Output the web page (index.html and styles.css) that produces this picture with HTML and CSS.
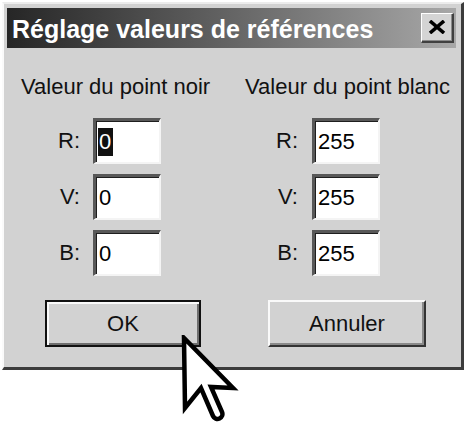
FILE: index.html
```html
<!DOCTYPE html>
<html lang="fr">
<head>
<meta charset="utf-8">
<title>Réglage valeurs de références</title>
<link rel="stylesheet" href="styles.css">
</head>
<body>
<div class="dialog">
  <div class="titlebar">
    <span class="title">Réglage valeurs de références</span>
    <div class="close">
      <svg width="18" height="14" viewBox="0 0 18 14"><path d="M2 1 L16 13 M16 1 L2 13" stroke="#000" stroke-width="3.6" fill="none"/></svg>
    </div>
  </div>
  <div class="panel">
    <div class="column col-left">
      <div class="heading">Valeur du point noir</div>
      <div class="fields">
        <div class="field"><span class="lbl">R:</span><div class="box"><span class="sel">0</span></div></div>
        <div class="field"><span class="lbl">V:</span><div class="box">0</div></div>
        <div class="field"><span class="lbl">B:</span><div class="box">0</div></div>
      </div>
    </div>
    <div class="column col-right">
      <div class="heading">Valeur du point blanc</div>
      <div class="fields">
        <div class="field"><span class="lbl">R:</span><div class="box">255</div></div>
        <div class="field"><span class="lbl">V:</span><div class="box">255</div></div>
        <div class="field"><span class="lbl">B:</span><div class="box">255</div></div>
      </div>
    </div>
  </div>
  <div class="buttons">
    <div class="btn btn-default">OK</div>
    <div class="btn btn-cancel">Annuler</div>
  </div>
</div>
<svg class="cursor" width="62" height="92" viewBox="0 0 62 92">
  <path d="M3,3 L4,73 L20,53 L32,81 A4.9,4.9 0 0 0 41,77 L30,52 L52,53 Z" fill="#fff" stroke="#000" stroke-width="4.5" stroke-linejoin="miter" stroke-miterlimit="10"/>
</svg>
</body>
</html>
```
FILE: styles.css
```css
html, body {
  margin: 0;
  padding: 0;
  background: #fff;
}
body {
  width: 465px;
  height: 423px;
  position: relative;
  overflow: hidden;
  font-family: "Liberation Sans", Arial, sans-serif;
  color: #111;
}
.dialog {
  box-sizing: border-box;
  width: 462px;
  margin: 2px 0 0 2px;
  background: #d2d2d2;
  border-style: solid;
  border-width: 2px 3px 3px 2px;
  border-color: #ececec #3c3c3c #3c3c3c #fafafa;
  padding: 4px 5px 20px 3px;
}
.titlebar {
  height: 40px;
  display: flex;
  align-items: center;
  justify-content: space-between;
  padding: 0 2px 0 5px;
  background: linear-gradient(to right, #262626 0%, #5e5e5e 45%, #a8a8a8 100%);
}
.title {
  color: #fff;
  font-weight: bold;
  font-size: 25px;
  line-height: 28px;
  white-space: nowrap;
  margin-top: 1px;
}
.close {
  box-sizing: border-box;
  width: 33px;
  height: 30px;
  background: #d4d4d4;
  border-style: solid;
  border-width: 1px 2px 2px 1px;
  border-color: #fff #404040 #404040 #fff;
  box-shadow: inset -1px -1px #8a8a8a;
  display: flex;
  align-items: center;
  justify-content: center;
}
.close svg {
  display: block;
  margin-top: -1px;
}
.panel {
  display: grid;
  grid-template-columns: 226px 1fr;
  padding-top: 27px;
}
.heading {
  font-size: 22px;
  line-height: 24px;
  white-space: nowrap;
}
.col-left .heading { padding-left: 14px; }
.col-right .heading { padding-left: 12px; }
.fields {
  display: flex;
  flex-direction: column;
  gap: 10px;
  margin-top: 19px;
}
.col-left .fields { padding-left: 40px; }
.col-right .fields { padding-left: 32px; }
.field {
  display: flex;
  align-items: center;
  gap: 13px;
}
.col-right .field { gap: 14px; }
.lbl {
  width: 33px;
  text-align: right;
  font-size: 22px;
  line-height: 24px;
}
.box {
  box-sizing: border-box;
  width: 68px;
  height: 46px;
  background: #fff;
  border-style: solid;
  border-width: 3px 2px 2px 3px;
  border-color: #585858 #f4f4f4 #f4f4f4 #585858;
  box-shadow: inset 1px 1px #1e1e1e;
  padding-left: 3px;
  display: flex;
  align-items: center;
  font-size: 22px;
  line-height: 24px;
  color: #000;
}
.sel {
  display: inline-block;
  background: #111;
  color: #fff;
  line-height: 28px;
  padding: 0 2px 0 1px;
  margin-left: -1px;
}
.buttons {
  display: flex;
  gap: 67px;
  padding-left: 38px;
  margin-top: 24px;
}
.btn {
  box-sizing: border-box;
  height: 47px;
  display: flex;
  align-items: center;
  justify-content: center;
  font-size: 22px;
  line-height: 24px;
  background: #d2d2d2;
}
.btn-default {
  width: 156px;
  border: 2px solid #111;
  box-shadow: inset 2px 2px #fafafa, inset -2px -2px #6e6e6e;
}
.btn-cancel {
  width: 158px;
  border-style: solid;
  border-width: 2px;
  border-color: #fafafa #333 #333 #fafafa;
  box-shadow: inset -2px -2px #8a8a8a;
}
.cursor {
  position: absolute;
  left: 181px;
  top: 335px;
}
```
